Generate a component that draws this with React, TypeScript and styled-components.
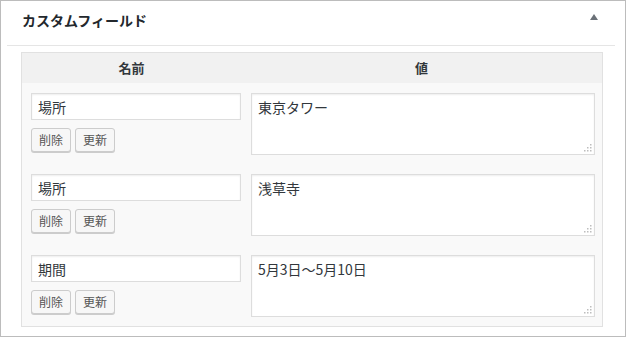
import React from 'react';
import styled, {createGlobalStyle} from 'styled-components';

const GlobalStyle = createGlobalStyle`
  html, body {
    margin: 0;
    padding: 0;
    background: #fff;
  }
  body {
    font-family: "Noto Sans CJK JP", "Noto Sans", sans-serif;
    color: #32373c;
  }
`;

const Postbox = styled.div`
  box-sizing: border-box;
  width: 626px;
  height: 337px;
  border: 1px solid #bcbcbc;
  background: #fff;
`;

const Header = styled.div`
  display: flex;
  justify-content: space-between;
  align-items: flex-start;
  height: 44px;
  margin: 0 10px 0 6px;
  border-bottom: 1px solid #e5e5e5;
`;

const Title = styled.h2`
  margin: 0;
  padding: 9px 0 0 15px;
  font-size: 14px;
  line-height: 20px;
  font-weight: 700;
  color: #23282d;
`;

const Toggle = styled.span`
  width: 0;
  height: 0;
  margin: 13px 17px 0 0;
  border-left: 4.5px solid transparent;
  border-right: 4.5px solid transparent;
  border-bottom: 6px solid #6b7178;
`;

const Table = styled.div`
  box-sizing: border-box;
  width: 582px;
  margin: 6px 0 0 20px;
  border: 1px solid #e1e1e1;
  background: #f9f9f9;
`;

const Row = styled.div<{head?: boolean}>`
  display: grid;
  grid-template-columns: 219px 1fr;
  ${({head}) => head
    ? 'height: 30px; background: #f1f1f1;'
    : 'padding: 10px 0 9px;'}
`;

const HeadCell = styled.div`
  text-align: center;
  font-size: 13px;
  font-weight: 700;
  line-height: 30px;
  color: #32373c;
`;

const NameCell = styled.div`
  display: flex;
  flex-direction: column;
  align-items: flex-start;
  gap: 8px;
  padding-left: 9px;
`;

const ValueCell = styled.div`
  position: relative;
  padding-left: 10px;
`;

const fieldBase = `
  box-sizing: border-box;
  margin: 0;
  border: 1px solid #dddddd;
  background: #fff;
  box-shadow: inset 0 1px 2px rgba(0, 0, 0, 0.07);
  font-family: "Noto Sans CJK JP", "Noto Sans", sans-serif;
  font-size: 14px;
  color: #32373c;
  outline: none;
`;

const KeyInput = styled.input`
  ${fieldBase}
  width: 210px;
  height: 27px;
  padding: 0 6px;
  line-height: 25px;
`;

const ValueArea = styled.textarea`
  ${fieldBase}
  display: block;
  width: 344px;
  height: 62px;
  padding: 3px 6px;
  line-height: 20px;
  resize: none;
`;

const Grip = styled.svg`
  position: absolute;
  right: 10px;
  bottom: 3px;
`;

const Buttons = styled.div`
  display: flex;
  gap: 4px;
`;

const SmallButton = styled.button`
  box-sizing: border-box;
  width: 40px;
  height: 24px;
  padding: 0;
  border: 1px solid #cccccc;
  border-radius: 3px;
  background: #f7f7f7;
  box-shadow: 0 1px 0 #cccccc;
  font-family: "Noto Sans CJK JP", "Noto Sans", sans-serif;
  font-size: 12px;
  line-height: 22px;
  color: #555;
  cursor: pointer;
`;

const ResizeGrip = () => (
  <Grip width="9" height="9" viewBox="0 0 9 9">
    {[[7, 1], [4, 4], [7, 4], [1, 7], [4, 7], [7, 7]].map(([x, y]) => (
      <rect key={`${x}-${y}`} x={x} y={y} width="1.5" height="1.5" fill="#bdbdbd" />
    ))}
  </Grip>
);

const fields = [
  {key: '場所', value: '東京タワー'},
  {key: '場所', value: '浅草寺'},
  {key: '期間', value: '5月3日～5月10日'},
];

export default function App() {
  return (
    <>
      <GlobalStyle />
      <Postbox>
        <Header>
          <Title>カスタムフィールド</Title>
          <Toggle />
        </Header>
        <Table>
          <Row head>
            <HeadCell>名前</HeadCell>
            <HeadCell>値</HeadCell>
          </Row>
          {fields.map((f, i) => (
            <Row key={i}>
              <NameCell>
                <KeyInput defaultValue={f.key} />
                <Buttons>
                  <SmallButton>削除</SmallButton>
                  <SmallButton>更新</SmallButton>
                </Buttons>
              </NameCell>
              <ValueCell>
                <ValueArea defaultValue={f.value} />
                <ResizeGrip />
              </ValueCell>
            </Row>
          ))}
        </Table>
      </Postbox>
    </>
  );
}
